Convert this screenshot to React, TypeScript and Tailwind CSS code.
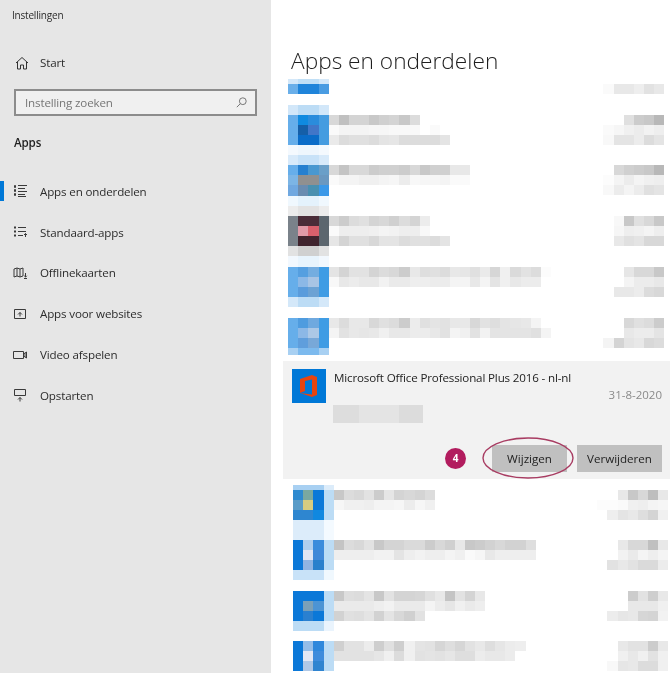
import React from "react";

type AppRow = {
  gap: number;
  textTop: number;
  icon: { h: number; c: string[] }[];
  text: number[][];
  date: number[][];
};

const gray = (n: number) => `rgb(${n},${n},${n})`;

const before: AppRow[] = [
  {
    gap: 0,
    textTop: 5,
    icon: [
      { h: 5, c: ["#d4e8f9", "#c0dff6", "#c0dff6", "#d4e8f9"] },
      { h: 10, c: ["#6aafe9", "#1f84da", "#1f84da", "#4a9ce2"] },
    ],
    text: [],
    date: [[250, 232, 232, 238, 226, 232]],
  },
  {
    gap: 11,
    textTop: 10,
    icon: [
      { h: 10, c: ["#d2e7f9", "#bcdcf5", "#bcdcf5", "#d2e7f9"] },
      { h: 10, c: ["#66aeea", "#0f8ae0", "#2a8cdc", "#459ce0"] },
      { h: 10, c: ["#66aeea", "#155fa8", "#4176c8", "#459ce0"] },
      { h: 10, c: ["#66aeea", "#0a6cc8", "#0a6cc8", "#459ce0"] },
      { h: 10, c: ["#f4f9fe", "#eef6fd", "#eef6fd", "#f4f9fe"] },
    ],
    text: [
      [216, 192, 212, 212, 200, 208, 212, 200, 220],
      [250, 244, 244, 244, 246, 246, 248, 248, 248, 255, 250],
      [234, 220, 224, 224, 220, 228, 230, 220, 220, 220, 220, 228],
    ],
    date: [
      [255, 255, 224, 204, 200, 184],
      [250, 246, 240, 236, 242, 238],
      [248, 228, 228, 236, 220, 228],
    ],
  },
  {
    gap: 0,
    textTop: 10,
    icon: [
      { h: 10, c: ["#d8eafa", "#c8e2f8", "#c8e2f8", "#d8eafa"] },
      { h: 10, c: ["#66aeea", "#2680d0", "#4a98d0", "#6a9fc8"] },
      { h: 10, c: ["#7cb5e5", "#909090", "#909090", "#6a98c0"] },
      { h: 11, c: ["#70a8e0", "#6a8cb0", "#4a90b0", "#3a98e8"] },
      { h: 10, c: ["#f0f8fe", "#e4f2fc", "#e4f2fc", "#f0f8fe"] },
    ],
    text: [
      [216, 196, 216, 216, 204, 208, 208, 204, 216, 200, 208, 208, 232, 232],
      [250, 244, 244, 240, 240, 244, 246, 236, 248, 246, 246, 244, 250, 250],
    ],
    date: [
      [255, 216, 208, 204, 200, 184],
      [252, 244, 236, 244, 240, 238],
      [248, 236, 244, 236, 224, 228],
    ],
  },
  {
    gap: 0,
    textTop: 10,
    icon: [
      { h: 10, c: ["#ececec", "#e2e2e2", "#e2e2e2", "#ececec"] },
      { h: 10, c: ["#7a828a", "#4a2c38", "#4a2c38", "#5c666e"] },
      { h: 10, c: ["#7a828a", "#e09aa8", "#d8606c", "#5c666e"] },
      { h: 10, c: ["#7a828a", "#40242e", "#40242e", "#5c666e"] },
      { h: 10, c: ["#e2e2e2", "#d0d0d0", "#d0d0d0", "#e2e2e2"] },
      { h: 11, c: ["#f2f8fe", "#e8f4fd", "#e8f4fd", "#f2f8fe"] },
    ],
    text: [
      [216, 204, 220, 224, 212, 216, 208, 220, 212, 236],
      [250, 238, 238, 238, 240, 244, 242, 238, 238, 248],
      [230, 212, 224, 224, 216, 228, 228, 220, 224, 224, 220, 228],
    ],
    date: [
      [248, 200, 224, 216, 200],
      [246, 238, 240, 244, 238],
      [232, 224, 228, 216, 216],
    ],
  },
  {
    gap: 0,
    textTop: 0,
    icon: [
      { h: 10, c: ["#66aeea", "#559fe0", "#74ade0", "#3f9ce4"] },
      { h: 10, c: ["#66aeea", "#8cb8e6", "#a8c4e4", "#3f9ce4"] },
      { h: 10, c: ["#66aeea", "#5a9cdc", "#6ca2d4", "#3f9ce4"] },
      { h: 10, c: ["#d4e8f9", "#bcdcf5", "#bcdcf5", "#d4e8f9"] },
    ],
    text: [
      [228, 212, 226, 226, 212, 220, 216, 204, 232, 222, 224, 220, 232, 230, 224, 234, 214, 240, 218, 226, 220, 252],
      [248, 232, 236, 232, 232, 242, 234, 234, 238, 238, 236, 236, 244, 244, 232, 244, 228, 240, 232, 236, 236],
    ],
    date: [
      [255, 230, 216, 216, 200],
      [255, 244, 236, 236, 232],
      [232, 232, 236, 220, 216],
    ],
  },
  {
    gap: 11,
    textTop: 0,
    icon: [
      { h: 10, c: ["#66aeea", "#4f9cdf", "#6fa9df", "#3f9ce4"] },
      { h: 10, c: ["#66aeea", "#8cb8e6", "#acc8e6", "#3f9ce4"] },
      { h: 10, c: ["#66aeea", "#5f9edc", "#78a8d8", "#3f9ce4"] },
      { h: 7, c: ["#a8d0f2", "#7cbaee", "#7cbaee", "#a8d0f2"] },
    ],
    text: [
      [232, 220, 232, 232, 216, 224, 220, 204, 236, 224, 228, 226, 232, 232, 216, 226, 222, 228, 230, 232, 244],
      [244, 226, 232, 230, 232, 240, 232, 232, 236, 236, 232, 226, 244, 240, 226, 242, 228, 228, 228, 228, 224, 244],
    ],
    date: [
      [255, 216, 224, 220, 204],
      [255, 232, 236, 236, 228],
      [244, 212, 228, 232, 216, 220],
    ],
  },
];

const after: AppRow[] = [
  {
    gap: 6,
    textTop: 5,
    icon: [
      { h: 5, c: ["#a8d0f2", "#a8d0f2", "#a8d0f2", "#dcecfa"] },
      { h: 10, c: ["#2e8ad0", "#7aa8a0", "#0b78d8", "#bcdcf5"] },
      { h: 10, c: ["#5a9cc8", "#d8cc80", "#0b78d8", "#bcdcf5"] },
      { h: 10, c: ["#2e86d0", "#2e86d0", "#1088e0", "#bcdcf5"] },
      { h: 20, c: ["#dcecfa", "#dcecfa", "#dcecfa", "#f4faff"] },
    ],
    text: [
      [200, 220, 216, 226, 204, 230, 212, 216, 212, 220],
      [246, 240, 240, 238, 244, 244, 246, 236, 246, 240],
    ],
    date: [
      [255, 255, 232, 200, 216, 190, 232],
      [252, 252, 250, 240, 238, 244, 246],
      [238, 228, 232, 222, 212, 240],
    ],
  },
  {
    gap: 0,
    textTop: 0,
    icon: [
      { h: 10, c: ["#0b78d8", "#b0cfee", "#3a8cdc", "#bcdcf5"] },
      { h: 10, c: ["#0b78d8", "#e0e6f4", "#4088d8", "#bcdcf5"] },
      { h: 10, c: ["#0b78d8", "#90b4e2", "#2a80cc", "#bcdcf5"] },
      { h: 10, c: ["#c8e2f8", "#c8e2f8", "#c8e2f8", "#f0f8fe"] },
    ],
    text: [
      [196, 220, 216, 226, 200, 212, 212, 218, 218, 204, 216, 208, 232, 200, 204, 210, 216, 210, 210, 222],
      [238, 238, 238, 238, 242, 242, 228, 238, 242, 238, 238, 244, 240, 250, 246, 232, 238, 238, 238, 238],
    ],
    date: [
      [232, 216, 216, 192, 232],
      [242, 234, 244, 238, 244],
      [226, 232, 226, 218, 218, 236],
    ],
  },
  {
    gap: 11,
    textTop: 0,
    icon: [
      { h: 10, c: ["#0b78d8", "#0b78d8", "#0b78d8", "#bcdcf5"] },
      { h: 10, c: ["#0b78d8", "#7aa0b8", "#4c94d4", "#bcdcf5"] },
      { h: 10, c: ["#0b78d8", "#2a80d0", "#0b78d8", "#bcdcf5"] },
      { h: 10, c: ["#bcdcf5", "#bcdcf5", "#bcdcf5", "#eaf4fd"] },
    ],
    text: [
      [200, 222, 220, 228, 200, 226, 212, 212, 214, 224, 232, 196, 226, 212, 232],
      [234, 234, 234, 234, 238, 242, 234, 234, 234, 244, 236, 230, 240, 234, 238],
      [210, 224, 222, 228, 210, 228, 216, 208, 226],
    ],
    date: [
      [255, 204, 226, 206, 232],
      [255, 232, 232, 232, 240],
      [236, 230, 232, 214, 212, 242],
    ],
  },
  {
    gap: 10,
    textTop: 0,
    icon: [
      { h: 10, c: ["#0b78d8", "#94bde8", "#2f88dc", "#bcdcf5"] },
      { h: 10, c: ["#0b78d8", "#e4e8f4", "#3f8cdc", "#bcdcf5"] },
      { h: 10, c: ["#0b78d8", "#b0c8e6", "#2f84d0", "#bcdcf5"] },
    ],
    text: [
      [208, 226, 226, 236, 206, 224, 206, 240, 228, 226, 214, 222, 214, 226, 232, 222, 230, 236, 238],
      [226, 226, 226, 226, 230, 240, 220, 240, 226, 228, 226, 230, 222, 222, 236, 232, 232, 236],
    ],
    date: [
      [232, 226, 226, 204, 232],
      [240, 232, 240, 226, 240],
      [248, 230, 232, 220, 220, 240],
    ],
  },
];

function Strip({ cells }: { cells: number[] }) {
  return (
    <div className="flex h-[10px]">
      {cells.map((n, i) => (
        <div key={i} className="h-[10px] w-[10.1px]" style={{ background: gray(n) }} />
      ))}
    </div>
  );
}

function BlurredRow({ row }: { row: AppRow }) {
  return (
    <div className="flex items-start" style={{ marginTop: row.gap }}>
      <div className="shrink-0">
        {row.icon.map((line, i) => (
          <div key={i} className="flex" style={{ height: line.h }}>
            {line.c.map((c, j) => (
              <div key={j} className="w-[10.2px]" style={{ background: c }} />
            ))}
          </div>
        ))}
      </div>
      <div style={{ paddingTop: row.textTop }}>
        {row.text.map((cells, i) => (
          <Strip key={i} cells={cells} />
        ))}
      </div>
      <div className="ml-auto flex flex-col items-end" style={{ paddingTop: row.textTop }}>
        {row.date.map((cells, i) => (
          <Strip key={i} cells={cells} />
        ))}
      </div>
    </div>
  );
}

const navIcons: Record<string, React.ReactNode> = {
  list: (
    <>
      <path d="M1 2.5h2M1 6.5h2M1 10.5h2" strokeWidth="2.4" />
      <path d="M5 1.5h9M5 4.5h7M5 7.5h9M5 10.5h7M5 12.5h8" />
    </>
  ),
  defaults: (
    <>
      <path d="M1 2.5h2M1 6.5h2M1 10.5h2" strokeWidth="2.2" />
      <path d="M5 2.5h8M5 6.5h8M5 10.5h5M12.5 12V8.5M11 10l1.5-1.5L14 10" />
    </>
  ),
  map: (
    <>
      <path d="M1 3l3-1 3 1 3-1v8l-3 1-3-1-3 1zM4 2v8M7 3v8" />
      <path d="M12.5 7v4M11 12.5h3M11.2 9.8l1.3 1.3 1.3-1.3" />
    </>
  ),
  web: (
    <>
      <path d="M1.5 2.5h11v9h-11z" />
      <path d="M7 9.5V5.5M5 7.5l2-2 2 2" />
    </>
  ),
  video: (
    <>
      <path d="M.5 3.5h10v7H.5z" />
      <path d="M10.5 6l3-2v6l-3-2M12 5v4" />
    </>
  ),
  boot: (
    <>
      <path d="M1.5 1.5h11v6h-11z" />
      <path d="M7 13.5V9.5M5 11.5l2-2 2 2" />
    </>
  ),
};

const navItems = [
  { label: "Apps en onderdelen", icon: "list", active: true },
  { label: "Standaard-apps", icon: "defaults" },
  { label: "Offlinekaarten", icon: "map" },
  { label: "Apps voor websites", icon: "web" },
  { label: "Video afspelen", icon: "video" },
  { label: "Opstarten", icon: "boot" },
];

function Sidebar() {
  return (
    <aside className="flex w-[271px] shrink-0 flex-col bg-[#e6e6e6] text-[11.6px] tracking-[-0.15px] text-[#2c2c2c]">
      <div className="pl-[12px] pt-[8px] text-[10px] leading-[14px] tracking-[-0.2px]">Instellingen</div>
      <div className="mt-[27px] flex h-[28px] items-center pl-[15px]">
        <svg width="14" height="14" viewBox="0 0 14 14" fill="none" stroke="#333" strokeWidth="1">
          <path d="M1 7l6-5.5L13 7M2.5 6v7h3V9h3v4h3V6" />
        </svg>
        <span className="ml-[11px]">Start</span>
      </div>
      <div className="ml-[14px] mt-[12px] flex h-[27px] w-[243px] items-center justify-between border-2 border-[#8c8c8c] bg-[#f0f0f0] pl-[9px] pr-[8px] text-[#767676]">
        <span>Instelling zoeken</span>
        <svg width="11" height="11" viewBox="0 0 11 11" fill="none" stroke="#777" strokeWidth="1">
          <circle cx="6.8" cy="4.2" r="3.4" />
          <path d="M4.4 6.6L.8 10.2" />
        </svg>
      </div>
      <div className="pl-[14px] pt-[18px] font-semibold leading-[17px] text-[#1f1f1f]">Apps</div>
      <nav className="mt-[20px] flex flex-col">
        {navItems.map((item) => (
          <div key={item.label} className="relative flex h-[40.8px] items-center pl-[13px]">
            {item.active && <div className="absolute left-0 top-[10px] h-[20px] w-[4px] bg-[#0078d7]" />}
            <svg width="15" height="14" viewBox="0 0 15 14" fill="none" stroke="#3a3a3a" strokeWidth="1">
              {navIcons[item.icon]}
            </svg>
            <span className="ml-[12px]">{item.label}</span>
          </div>
        ))}
      </nav>
    </aside>
  );
}

function OfficeRow() {
  return (
    <div className="relative ml-[12px] mt-[6px] flex h-[118px] flex-col bg-[#f2f2f2] pl-[9px] pr-[8px] pt-[8px]">
      <div className="flex">
        <div className="flex h-[34px] w-[34px] shrink-0 items-center justify-center bg-[#0078d7]">
          <svg width="20" height="24" viewBox="0 0 20 24">
            <path d="M1 5L13 1l5 2v18l-5 2-12-4 12 1.5V5.5L6 7v10l-5 2z" fill="#e8440f" />
          </svg>
        </div>
        <div className="ml-[8px] flex-1">
          <div className="text-[11.6px] leading-[18px] tracking-[-0.15px] text-[#222]">
            Microsoft Office Professional Plus 2016 - nl-nl
          </div>
          <div className="text-right text-[11.5px] leading-[16px] text-[#8a8a8a]">31-8-2020</div>
          <div className="-ml-[1px] mt-[2px] flex h-[18px] w-[90px] bg-[#e2e2e2]">
            <div className="h-full w-[26px] bg-[#dddddd]" />
            <div className="h-full w-[40px] bg-[#e4e4e4]" />
            <div className="h-full w-[24px] bg-[#dcdcdc]" />
          </div>
        </div>
      </div>
      <div className="mt-[22px] flex items-center justify-end">
        <div className="mr-[26px] flex h-[21px] w-[21px] items-center justify-center rounded-full bg-[#b21c5e] text-[10px] font-bold text-white">
          4
        </div>
        <button className="h-[27px] w-[75px] bg-[#c0c0c0] text-[11.6px] text-[#222]">Wijzigen</button>
        <button className="ml-[10px] h-[27px] w-[85px] bg-[#c0c0c0] text-[11.6px] text-[#222]">Verwijderen</button>
      </div>
      <svg className="absolute left-[198px] top-[75px]" width="94" height="44" viewBox="0 0 94 44" fill="none">
        <ellipse cx="47" cy="22" rx="45" ry="20" stroke="#a83c62" strokeWidth="1.4" />
      </svg>
    </div>
  );
}

export default function App() {
  return (
    <div
      className="flex h-[673px] w-[670px] overflow-hidden bg-white blur-[0.4px]"
      style={{ fontFamily: '"Open Sans", "Noto Sans", sans-serif' }}
    >
      <Sidebar />
      <main className="flex min-w-0 flex-1 flex-col">
        <h1 className="pl-[20px] pt-[44px] pb-[1px] text-[22.7px] font-light leading-[34px] text-[#1e1e1e]">
          Apps en onderdelen
        </h1>
        <div className="blur-[0.5px]">
          <div className="pr-[6px] pl-[17px]">
            {before.map((row, i) => (
              <BlurredRow key={i} row={row} />
            ))}
          </div>
        </div>
        <OfficeRow />
        <div className="blur-[0.5px]">
          <div className="pr-[2px] pl-[22px]">
            {after.map((row, i) => (
              <BlurredRow key={i} row={row} />
            ))}
          </div>
        </div>
      </main>
    </div>
  );
}
